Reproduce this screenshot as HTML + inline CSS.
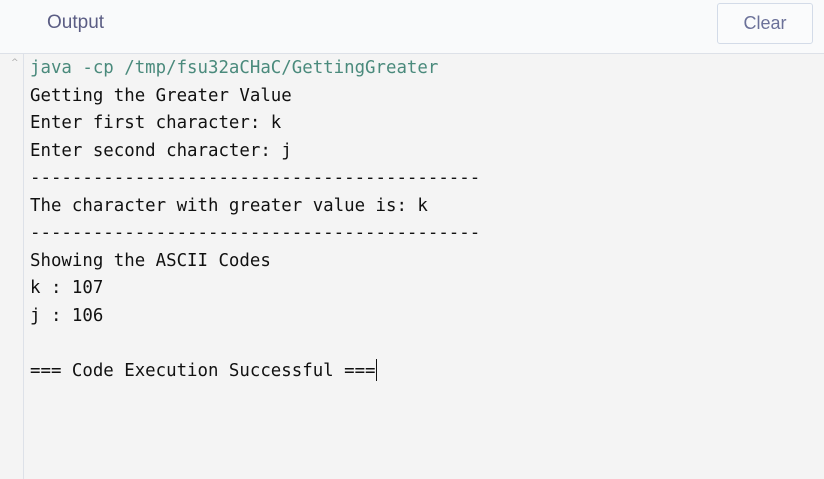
<!DOCTYPE html>
<html><head><style>
html,body{margin:0;padding:0;width:824px;height:479px;overflow:hidden;background:#f4f4f4;}
.hdr{position:absolute;left:0;top:0;width:824px;height:53px;background:#f9fafb;border-bottom:1px solid #dde1e8;}
.title{position:absolute;left:47px;top:12px;font:500 19px "Liberation Sans",sans-serif;color:#5b5d84;}
.btn{position:absolute;left:717px;top:3px;width:96px;height:41px;border:1px solid #d3dbe8;border-radius:3px;background:#fafbfc;box-sizing:border-box;font:18px "Liberation Sans",sans-serif;color:#6b7199;text-align:center;line-height:39px;}
.gut{position:absolute;left:0;top:54px;width:23px;height:425px;border-right:1px solid #dde1e8;background:#f4f4f4;}
.caret{position:absolute;left:11px;top:58px;font:9px "DejaVu Sans",sans-serif;color:#aaa;}
pre{position:absolute;left:30px;top:55px;margin:0;font:17.4px/27.5px "DejaVu Sans Mono",monospace;color:#111;}
.g{color:#4a8a7c;}
.cur{display:inline-block;width:1px;height:22px;background:#111;vertical-align:-5px;}
</style></head><body>
<div class="hdr"><div class="title">Output</div><div class="btn">Clear</div></div>
<div class="gut"></div><div class="caret">^</div>
<pre><span class="g">java -cp /tmp/fsu32aCHaC/GettingGreater</span>
Getting the Greater Value
Enter first character: k
Enter second character: j
-------------------------------------------
The character with greater value is: k
-------------------------------------------
Showing the ASCII Codes
k : 107
j : 106

=== Code Execution Successful ===<span class="cur"></span></pre>
</body></html>
